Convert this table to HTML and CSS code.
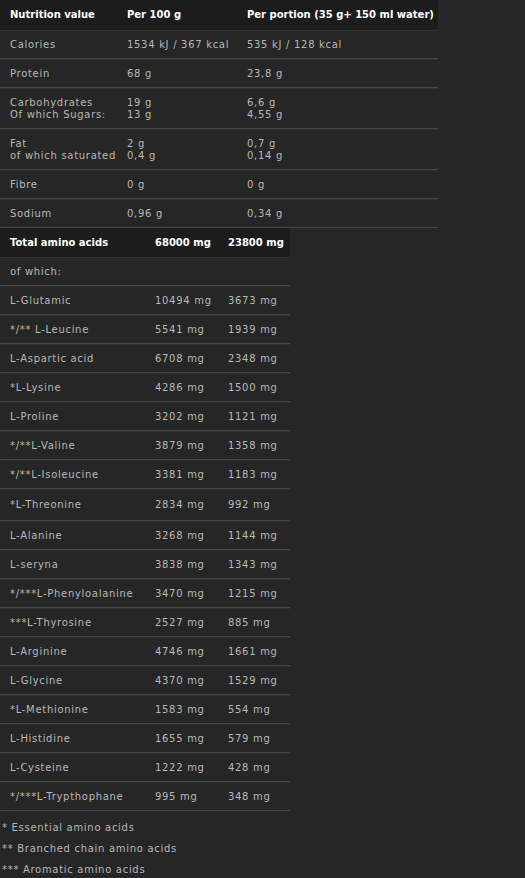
FILE: index.html
```html
<!DOCTYPE html>
<html>
<head>
<meta charset="utf-8">
<link rel="stylesheet" href="styles.css">
</head>
<body>
<table class="nut">
  <thead>
    <tr><th class="c1">Nutrition value</th><th class="c2">Per 100 g</th><th class="c3">Per portion (35 g+ 150 ml water)</th></tr>
  </thead>
  <tbody>
    <tr><td class="c1">Calories</td><td class="c2">1534 kJ / 367 kcal</td><td class="c3">535 kJ / 128 kcal</td></tr>
    <tr><td class="c1">Protein</td><td class="c2">68 g</td><td class="c3">23,8 g</td></tr>
    <tr class="two"><td class="c1">Carbohydrates<br>Of which Sugars:</td><td class="c2">19 g<br>13 g</td><td class="c3">6,6 g<br>4,55 g</td></tr>
    <tr class="two"><td class="c1">Fat<br>of which saturated</td><td class="c2">2 g<br>0,4 g</td><td class="c3">0,7 g<br>0,14 g</td></tr>
    <tr><td class="c1">Fibre</td><td class="c2">0 g</td><td class="c3">0 g</td></tr>
    <tr><td class="c1">Sodium</td><td class="c2">0,96 g</td><td class="c3">0,34 g</td></tr>
  </tbody>
</table>
<table class="amino">
  <thead>
    <tr><th class="a1">Total amino acids</th><th class="a2">68000 mg</th><th class="a3">23800 mg</th></tr>
  </thead>
  <tbody>
    <tr><td class="a1" colspan="3">of which:</td></tr>
    <tr><td class="a1">L-Glutamic</td><td class="a2">10494 mg</td><td class="a3">3673 mg</td></tr>
    <tr><td class="a1">*/** L-Leucine</td><td class="a2">5541 mg</td><td class="a3">1939 mg</td></tr>
    <tr><td class="a1">L-Aspartic acid</td><td class="a2">6708 mg</td><td class="a3">2348 mg</td></tr>
    <tr><td class="a1">*L-Lysine</td><td class="a2">4286 mg</td><td class="a3">1500 mg</td></tr>
    <tr><td class="a1">L-Proline</td><td class="a2">3202 mg</td><td class="a3">1121 mg</td></tr>
    <tr><td class="a1">*/**L-Valine</td><td class="a2">3879 mg</td><td class="a3">1358 mg</td></tr>
    <tr><td class="a1">*/**L-Isoleucine</td><td class="a2">3381 mg</td><td class="a3">1183 mg</td></tr>
    <tr class="tall"><td class="a1">*L-Threonine</td><td class="a2">2834 mg</td><td class="a3">992 mg</td></tr>
    <tr><td class="a1">L-Alanine</td><td class="a2">3268 mg</td><td class="a3">1144 mg</td></tr>
    <tr><td class="a1">L-seryna</td><td class="a2">3838 mg</td><td class="a3">1343 mg</td></tr>
    <tr><td class="a1">*/***L-Phenyloalanine</td><td class="a2">3470 mg</td><td class="a3">1215 mg</td></tr>
    <tr><td class="a1">***L-Thyrosine</td><td class="a2">2527 mg</td><td class="a3">885 mg</td></tr>
    <tr><td class="a1">L-Arginine</td><td class="a2">4746 mg</td><td class="a3">1661 mg</td></tr>
    <tr><td class="a1">L-Glycine</td><td class="a2">4370 mg</td><td class="a3">1529 mg</td></tr>
    <tr><td class="a1">*L-Methionine</td><td class="a2">1583 mg</td><td class="a3">554 mg</td></tr>
    <tr><td class="a1">L-Histidine</td><td class="a2">1655 mg</td><td class="a3">579 mg</td></tr>
    <tr><td class="a1">L-Cysteine</td><td class="a2">1222 mg</td><td class="a3">428 mg</td></tr>
    <tr><td class="a1">*/***L-Trypthophane</td><td class="a2">995 mg</td><td class="a3">348 mg</td></tr>
  </tbody>
</table>
<div class="notes">
  <p>* Essential amino acids</p>
  <p>** Branched chain amino acids</p>
  <p>*** Aromatic amino acids</p>
</div>
</body>
</html>
```
FILE: styles.css
```css
html, body {
  margin: 0;
  padding: 0;
  background: #262626;
}
body {
  font-family: "DejaVu Sans", Verdana, sans-serif;
  font-size: 10px;
  color: #b8b8b8;
  letter-spacing: 0.7px;
}
table {
  border-collapse: separate;
  border-spacing: 0;
  table-layout: fixed;
}
th {
  font-weight: bold;
  color: #ffffff;
  text-align: left;
  letter-spacing: 0;
  background: #1c1c1c;
}
td, th {
  padding: 0;
  vertical-align: middle;
  white-space: nowrap;
  line-height: 12px;
}
td {
  border-top: 1px solid #303030;
  border-bottom: 1px solid #454545;
  height: 27px;
}
th {
  height: 30px;
}
.nut { width: 438px; }
.nut .c1 { width: 117px; padding-left: 10px; }
.nut .c2 { width: 120px; }
.nut .c3 { width: auto; }
.nut tr.two td { height: 39px; }

.amino { width: 290px; }
.amino th { height: 29px; }
.amino .a1 { width: 145px; padding-left: 10px; }
.amino .a2 { width: 73px; }
.amino .a3 { width: auto; }
.amino tr.tall td { height: 30px; }

.notes {
  padding-top: 6px;
  padding-left: 2px;
}
.notes p {
  margin: 0;
  line-height: 21px;
}
```
